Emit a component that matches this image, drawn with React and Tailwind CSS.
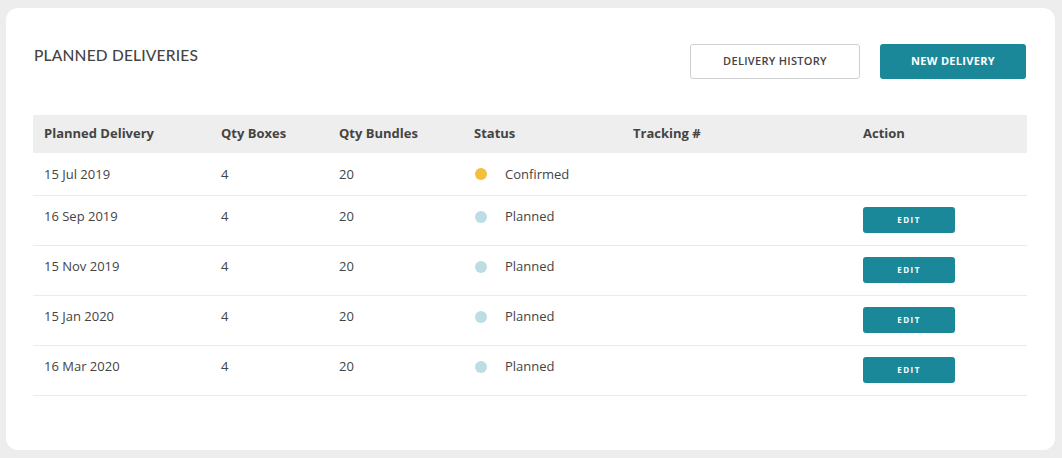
import React from "react";

const rows = [
  { date: "15 Jul 2019", boxes: 4, bundles: 20, status: "Confirmed", edit: false },
  { date: "16 Sep 2019", boxes: 4, bundles: 20, status: "Planned", edit: true },
  { date: "15 Nov 2019", boxes: 4, bundles: 20, status: "Planned", edit: true },
  { date: "15 Jan 2020", boxes: 4, bundles: 20, status: "Planned", edit: true },
  { date: "16 Mar 2020", boxes: 4, bundles: 20, status: "Planned", edit: true },
];

export default function App() {
  return (
    <div className="w-[1062px] h-[458px] bg-[#ededed] pt-[8px] pl-[6px] font-['Open_Sans',sans-serif]">
      <div className="w-[1049px] h-[442px] bg-white rounded-[12px] pl-[27px] pr-[28px] pt-[36px]">
        <div className="flex items-center justify-between h-[35px]">
          <h2 className="font-['Lato',sans-serif] text-[15.5px] font-medium text-[#444] tracking-[0.2px] pl-[1px] -mt-[12px]">
            PLANNED DELIVERIES
          </h2>
          <div className="flex gap-[20px] mr-[1px]">
            <button className="w-[170px] h-[35px] border border-[#cfcfcf] rounded-[3px] text-[11px] font-semibold text-[#444] tracking-[0.3px]">
              DELIVERY HISTORY
            </button>
            <button className="w-[146px] h-[35px] bg-[#1a8898] rounded-[3px] text-[11px] font-bold text-white tracking-[0.3px]">
              NEW DELIVERY
            </button>
          </div>
        </div>

        <table className="mt-[36px] w-[994px] table-fixed border-collapse text-[13px] text-[#444]">
          <colgroup>
            <col className="w-[177px]" />
            <col className="w-[118px]" />
            <col className="w-[135px]" />
            <col className="w-[159px]" />
            <col className="w-[230px]" />
            <col className="w-[175px]" />
          </colgroup>
          <thead>
            <tr className="bg-[#eeeeee] h-[38px] text-left">
              <th className="pl-[11px] font-bold">Planned Delivery</th>
              <th className="pl-[11px] font-bold">Qty Boxes</th>
              <th className="pl-[11px] font-bold">Qty Bundles</th>
              <th className="pl-[11px] font-bold">Status</th>
              <th className="pl-[11px] font-bold">Tracking #</th>
              <th className="pl-[11px] font-bold">Action</th>
            </tr>
          </thead>
          <tbody>
            {rows.map((r, i) => {
              const cell = i === 0 ? "pl-[11px] pt-[1px]" : "pl-[11px] pb-[6px]";
              return (
                <tr key={i} className={`border-b border-[#ebebeb] ${i === 0 ? "h-[42px]" : "h-[50px]"}`}>
                  <td className={cell}>{r.date}</td>
                  <td className={cell}>{r.boxes}</td>
                  <td className={cell}>{r.bundles}</td>
                  <td className={cell}>
                    <div className="flex items-center gap-[18px] pl-[1px]">
                      <span
                        className={`w-[12px] h-[12px] rounded-full ${
                          r.status === "Confirmed" ? "bg-[#f4bf3d]" : "bg-[#bcdde4]"
                        }`}
                      />
                      <span>{r.status}</span>
                    </div>
                  </td>
                  <td className={cell}></td>
                  <td className="pl-[11px]">
                    {r.edit && (
                      <button className="w-[92px] h-[26px] bg-[#1a8898] rounded-[3px] text-white text-[8px] font-bold tracking-[1.5px]">
                        EDIT
                      </button>
                    )}
                  </td>
                </tr>
              );
            })}
          </tbody>
        </table>
      </div>
    </div>
  );
}
